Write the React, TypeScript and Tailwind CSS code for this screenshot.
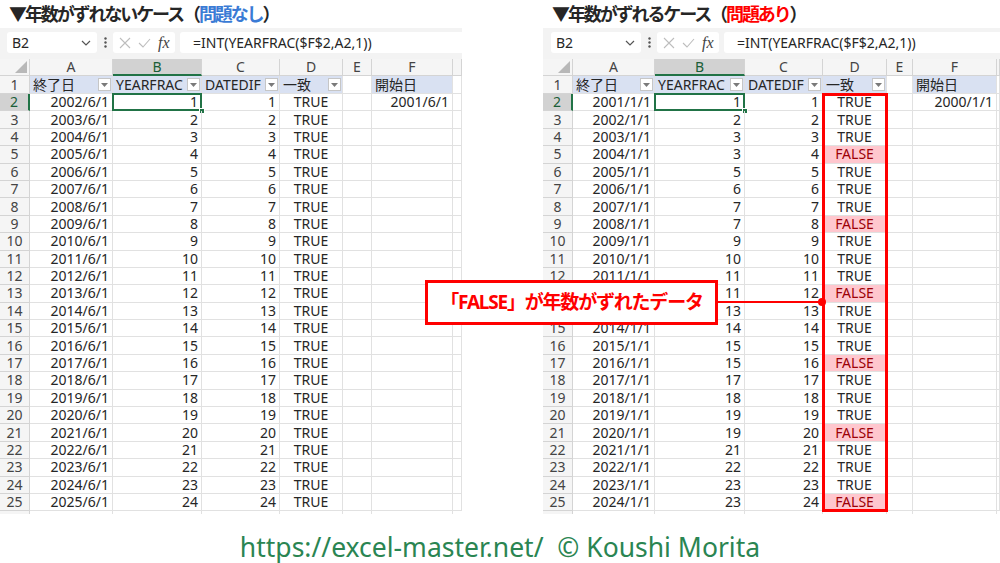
import React from "react";

type Row = { n: number; a: string; b: number; c: number; ok: boolean };

function Dropdown() {
  return (
    <span className="ml-auto mr-[1px] flex h-[13px] w-[13px] shrink-0 items-center justify-center border border-[#c6c6c6] bg-white">
      <svg width="7" height="4" viewBox="0 0 7 4">
        <path d="M0 0h7L3.5 4z" fill="#7a7a7a" />
      </svg>
    </span>
  );
}

function FormulaBar({ nameMl }: { nameMl: string }) {
  return (
    <div className="flex h-[31px] items-start bg-[#f3f3f3] pt-[4px]">
      <div className={`${nameMl} flex h-[21px] w-[90px] items-center justify-between rounded-[3px] bg-white pl-[5px] pr-[6px] text-[14px] text-[#262626]`}>
        <span>B2</span>
        <svg width="10" height="6" viewBox="0 0 10 6">
          <path d="M1 1l4 4 4-4" fill="none" stroke="#555" strokeWidth="1.2" />
        </svg>
      </div>
      <div className="flex h-[21px] w-[16px] items-center justify-center">
        <svg width="3" height="11" viewBox="0 0 3 11">
          <circle cx="1.5" cy="1.5" r="1.2" fill="#555" />
          <circle cx="1.5" cy="5.5" r="1.2" fill="#555" />
          <circle cx="1.5" cy="9.5" r="1.2" fill="#555" />
        </svg>
      </div>
      <div className="flex h-[21px] w-[62px] items-center gap-[7px] rounded-[3px] bg-white pl-[6px]">
        <svg width="12" height="12" viewBox="0 0 12 12">
          <path d="M1 1l10 10M11 1l-10 10" stroke="#bdbdbd" strokeWidth="1.1" />
        </svg>
        <svg width="13" height="10" viewBox="0 0 13 10">
          <path d="M1 5l4 4L12 1" fill="none" stroke="#bdbdbd" strokeWidth="1.1" />
        </svg>
        <span className="font-['Liberation_Serif',serif] text-[16px] italic leading-none text-[#444]">fx</span>
      </div>
      <div className="ml-[5px] flex h-[21px] flex-1 items-center rounded-l-[3px] bg-white pl-[13px] text-[14px] text-[#262626]">
        =INT(YEARFRAC($F$2,A2,1))
      </div>
    </div>
  );
}

function Sheet({
  title,
  w,
  rows,
  f2,
  nameMl,
  right,
}: {
  title: React.ReactNode;
  w: string[];
  rows: Row[];
  f2: string;
  nameMl: string;
  right: boolean;
}) {
  const [wR, wA, wB, wC, wD, wE, wF, wG] = w;
  const cell = "shrink-0 border-r border-b border-[#e1e1e1] flex items-center";
  const hcell = "shrink-0 border-r border-b border-[#d4d4d4] flex items-center justify-center";
  return (
    <div className="flex flex-col">
      <div className="flex h-[28px] items-center pl-[9px] text-[18px] font-bold tracking-[-2.1px] text-[#262626]">
        {title}
      </div>
      <FormulaBar nameMl={nameMl} />
      {/* column header row */}
      <div className="flex h-[17px] bg-[#f5f5f5] text-[14px] leading-none text-[#444]">
        <div className={`${wR} ${hcell} relative`}>
          <svg className="absolute bottom-[2px] right-[2px]" width="12" height="12" viewBox="0 0 12 12">
            <path d="M12 0V12H0z" fill="#b8b8b8" />
          </svg>
        </div>
        <div className={`${wA} ${hcell}`}>A</div>
        <div className={`${wB} shrink-0 flex items-center justify-center border-r border-[#d4d4d4] border-b-2 border-b-[#217346] bg-[#d2d2d2] text-[#1b5e38]`}>B</div>
        <div className={`${wC} ${hcell}`}>C</div>
        <div className={`${wD} ${hcell}`}>D</div>
        <div className={`${wE} ${hcell}`}>E</div>
        <div className={`${wF} ${hcell}`}>F</div>
        <div className={`${wG} ${hcell}`}></div>
      </div>
      {/* row 1 */}
      <div className="flex h-[18px] text-[14px] leading-none text-[#262626]">
        <div className={`${wR} ${hcell} bg-[#f5f5f5] text-[#444]`}>1</div>
        <div className={`${wA} ${cell} bg-[#d9e1f2] pl-[3px]`}>
          終了日
          <Dropdown />
        </div>
        <div className={`${wB} ${cell} bg-[#d9e1f2] pl-[3px]`}>
          YEARFRAC
          <Dropdown />
        </div>
        <div className={`${wC} ${cell} bg-[#d9e1f2] pl-[3px]`}>
          DATEDIF
          <Dropdown />
        </div>
        <div className={`${wD} ${cell} bg-[#d9e1f2] pl-[3px]`}>
          一致
          <Dropdown />
        </div>
        <div className={`${wE} ${cell}`}></div>
        <div className={`${wF} ${cell} bg-[#d9e1f2] pl-[3px]`}>開始日</div>
        <div className={`${wG} ${cell}`}></div>
      </div>
      {/* data rows */}
      <div className="relative">
        {rows.map((r) => {
          const sel = r.n === 2;
          return (
            <div key={r.n} className="flex h-[17.4px] text-[14px] leading-none text-[#262626]">
              {sel ? (
                <div className={`${wR} shrink-0 flex items-center justify-center border-b border-[#d4d4d4] border-r-2 border-r-[#217346] bg-[#d2d2d2] text-[#1b5e38]`}>
                  {r.n}
                </div>
              ) : (
                <div className={`${wR} ${hcell} bg-[#f5f5f5] text-[#444]`}>{r.n}</div>
              )}
              <div className={`${wA} ${cell} justify-end pr-[3px]`}>{r.a}</div>
              <div className={`${wB} ${cell} relative justify-end pr-[3px]`}>
                {r.b}
                {sel && (
                  <>
                    <span className="pointer-events-none absolute inset-[-1px] border-2 border-[#217346]" />
                    <span className="absolute bottom-[-4px] right-[-4px] h-[6px] w-[6px] border border-white bg-[#217346]" />
                  </>
                )}
              </div>
              <div className={`${wC} ${cell} justify-end pr-[3px]`}>{r.c}</div>
              {r.ok ? (
                <div className={`${wD} ${cell} justify-center`}>TRUE</div>
              ) : (
                <div className={`${wD} ${cell} justify-center bg-[#ffc7ce] text-[#9c0006]`}>FALSE</div>
              )}
              <div className={`${wE} ${cell}`}></div>
              <div className={`${wF} ${cell} justify-end pr-[3px]`}>{sel ? f2 : ""}</div>
              <div className={`${wG} ${cell}`}></div>
            </div>
          );
        })}
        {right && (
          <div className="pointer-events-none absolute bottom-[-1px] left-[279px] top-[-1px] w-[66px] border-[3px] border-[#ff0000]" />
        )}
      </div>
      <div className="flex h-[3px]">
        <div className={`${wR} shrink-0 border-r border-[#d4d4d4] bg-[#f5f5f5]`} />
        <div className={`${wA} shrink-0 border-r border-[#e1e1e1]`} />
        <div className={`${wB} shrink-0 border-r border-[#e1e1e1]`} />
        <div className={`${wC} shrink-0 border-r border-[#e1e1e1]`} />
        <div className={`${wD} shrink-0 border-r border-[#e1e1e1]`} />
        <div className={`${wE} shrink-0 border-r border-[#e1e1e1]`} />
        <div className={`${wF} shrink-0 border-r border-[#e1e1e1]`} />
        <div className={`${wG} shrink-0`} />
      </div>
    </div>
  );
}

export default function App() {
  const leftRows: Row[] = [];
  const rightRows: Row[] = [];
  for (let n = 2; n <= 25; n++) {
    leftRows.push({ n, a: `${2000 + n}/6/1`, b: n - 1, c: n - 1, ok: true });
    const year = 1999 + n;
    const leap = year % 4 === 0;
    rightRows.push({ n, a: `${year}/1/1`, b: leap ? n - 2 : n - 1, c: n - 1, ok: !leap });
  }

  return (
    <div className="relative h-[563px] w-[1000px] overflow-hidden bg-white font-['Noto_Sans','Noto_Sans_CJK_JP',sans-serif]">
      <div className="flex h-[514px]">
        <div className="w-[462px] shrink-0">
          <Sheet
            title={
              <>
                ▼年数がずれないケース（<span className="text-[#3a7bd5]">問題なし</span>）
              </>
            }
            w={["w-[30px]", "w-[83px]", "w-[89px]", "w-[78px]", "w-[63px]", "w-[29px]", "w-[81px]", "w-[9px]"]}
            rows={leftRows}
            f2="2001/6/1"
            nameMl="ml-[7px]"
            right={false}
          />
        </div>
        <div className="ml-[81px] w-[457px] shrink-0">
          <Sheet
            title={
              <>
                ▼年数がずれるケース（<span className="text-[#ff0000]">問題あり</span>）
              </>
            }
            w={["w-[30px]", "w-[82px]", "w-[90px]", "w-[78px]", "w-[64px]", "w-[26px]", "w-[84px]", "w-[3px]"]}
            rows={rightRows}
            f2="2000/1/1"
            nameMl="ml-[8px]"
            right={true}
          />
        </div>
      </div>
      <div className="flex h-[49px] items-end justify-center pb-[3px]">
        <span className="text-[26.5px] leading-none text-[#2a8552]">https://excel-master.net/&nbsp;&nbsp;© Koushi Morita</span>
      </div>

      {/* callout */}
      <div className="absolute left-[718px] top-[301px] h-[2px] w-[104px] bg-[#ff0000]" />
      <div className="absolute left-[818px] top-[298px] h-[8px] w-[8px] rounded-full bg-[#ff0000]" />
      <div className="absolute left-[425px] top-[280px] flex h-[45px] w-[293px] items-center justify-center border-[3px] border-[#ff0000] bg-white text-[19px] font-bold tracking-[-1.2px] text-[#ff0000]">
        「FALSE」が年数がずれたデータ
      </div>
    </div>
  );
}
